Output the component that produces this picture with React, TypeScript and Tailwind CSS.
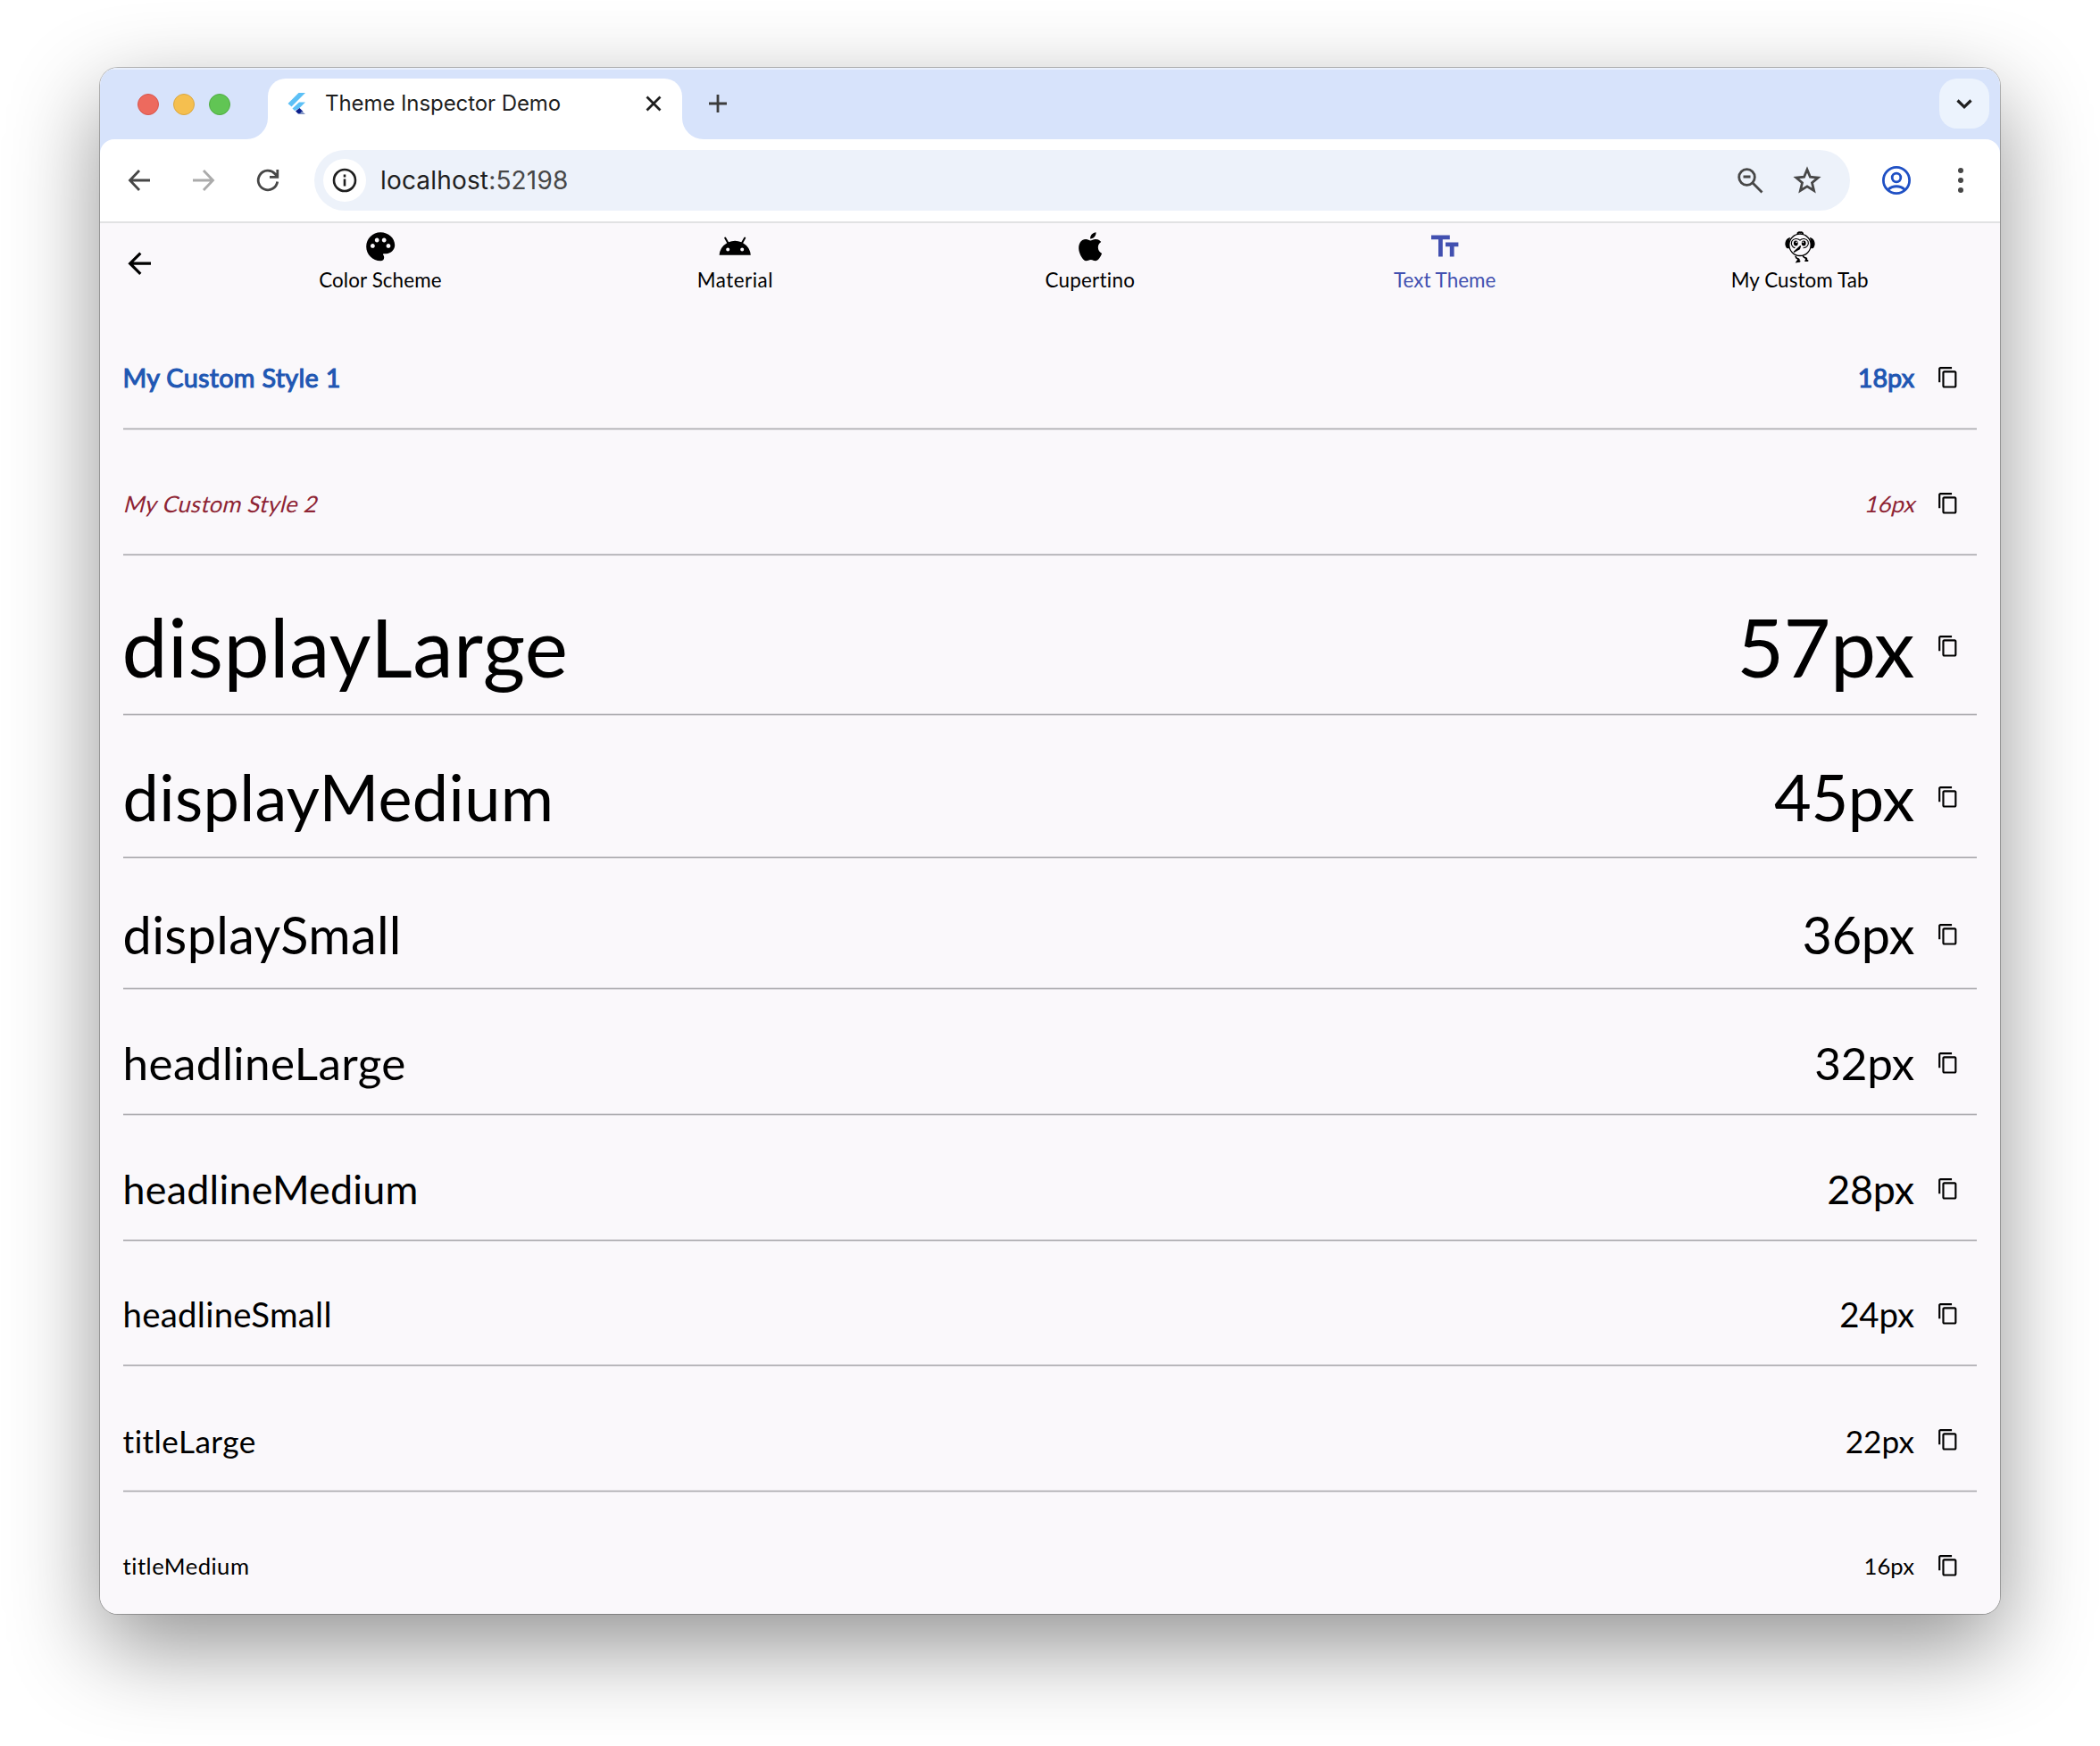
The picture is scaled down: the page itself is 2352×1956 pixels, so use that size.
import React from "react";
import { MdPalette, MdAndroid, MdTextFields, MdContentCopy, MdArrowBack } from "react-icons/md";

type Row = { name: string; size: string; h: string; text: string; track: string; sizeTrack?: string; nudge: string };

const rows: Row[] = [
  { name: "My Custom Style 1", size: "18px", h: "h-[64px]", text: "text-[28.8px] text-[#1f57b3] [-webkit-text-stroke:1.1px_#1f57b3]", track: "tracking-[0.28px]", nudge: "pt-[2px]" },
  { name: "My Custom Style 2", size: "16px", h: "h-[64px]", text: "inline-block origin-[0_80%] -skew-x-[14deg] text-[25.6px] text-[#8e2434]", track: "tracking-[0.24px]", nudge: "pt-[2px]" },
  { name: "displayLarge", size: "57px", h: "h-[102.4px]", text: "text-[91.2px]", track: "tracking-[0.45px] -ml-[1px]", sizeTrack: "tracking-[-0.4px]", nudge: "" },
  { name: "displayMedium", size: "45px", h: "h-[83.2px]", text: "text-[72px]", track: "tracking-[0.35px]", sizeTrack: "tracking-[-0.3px]", nudge: "pb-[3px]" },
  { name: "displaySmall", size: "36px", h: "h-[70.4px]", text: "text-[57.6px]", track: "tracking-[0.35px]", sizeTrack: "tracking-[-0.3px]", nudge: "" },
  { name: "headlineLarge", size: "32px", h: "h-[64px]", text: "text-[51.2px]", track: "tracking-[0.4px]", sizeTrack: "tracking-[-0.2px]", nudge: "" },
  { name: "headlineMedium", size: "28px", h: "h-[64px]", text: "text-[44.8px]", track: "tracking-[0.25px]", sizeTrack: "tracking-[-0.15px]", nudge: "pt-[2px]" },
  { name: "headlineSmall", size: "24px", h: "h-[64px]", text: "text-[38.4px]", track: "tracking-[0.25px]", sizeTrack: "tracking-[-0.15px]", nudge: "" },
  { name: "titleLarge", size: "22px", h: "h-[64px]", text: "text-[35.2px]", track: "tracking-[0.45px]", nudge: "pt-[3px]" },
  { name: "titleMedium", size: "16px", h: "h-[64px]", text: "text-[25.6px]", track: "tracking-[0.5px]", sizeTrack: "tracking-[0.05px]", nudge: "pt-[2px]" },
];

function AppleIcon() {
  return (
    <svg width="38.4" height="38.4" viewBox="0 0 24 24" fill="currentColor">
      <path d="M18.71 19.5c-.83 1.24-1.71 2.45-3.05 2.47-1.34.03-1.77-.79-3.29-.79-1.53 0-2 .77-3.27.82-1.31.05-2.3-1.32-3.14-2.53C4.25 17 2.94 12.45 4.7 9.39c.87-1.52 2.43-2.48 4.12-2.51 1.28-.02 2.5.87 3.29.87.78 0 2.26-1.07 3.81-.91.65.03 2.47.26 3.64 1.98-.09.06-2.17 1.28-2.15 3.81.03 3.02 2.65 4.03 2.68 4.04-.03.07-.42 1.44-1.38 2.83M13 3.5c.73-.83 1.94-1.46 2.94-1.5.13 1.17-.34 2.35-1.04 3.19-.69.85-1.83 1.51-2.95 1.42-.15-1.15.41-2.35 1.05-3.11z" />
    </svg>
  );
}

function BirdIcon() {
  return (
    <svg width="34" height="36" viewBox="0 0 34 36" fill="none" stroke="#000" strokeWidth="1.3" strokeLinecap="round">
      <path d="M14.5 2.2C15.5 1.2 16.5 1 17.5 1.6C18.5 .8 19.5 1.4 20 2.4" strokeWidth="2" />
      <circle cx="17" cy="15.3" r="12.2" />
      <path d="M5.2 7.8C2.4 8.4 1 11.6 1 14.2C1 17.2 2.6 19.2 4.6 18.6C4 15.2 4 11.2 5.2 7.8Z" fill="#000" />
      <path d="M28.8 7.8C31.6 8.4 33 11.6 33 14.2C33 17.2 31.4 19.2 29.4 18.6C30 15.2 30 11.2 28.8 7.8Z" fill="#000" />
      <path d="M17 10.2C14.5 7.6 9.5 7.8 7.8 11.3C6.5 14.8 8.5 18.2 11 18.6M17 10.2C19.2 7.6 24.2 7.8 26 11.3C27.3 15 25 18.5 21 18.7" strokeWidth="1.1" />
      <ellipse cx="12.3" cy="13.6" rx="2.4" ry="3" fill="#000" stroke="none" />
      <ellipse cx="21.2" cy="13.6" rx="2.4" ry="3" fill="#000" stroke="none" />
      <circle cx="13.1" cy="12.4" r=".8" fill="#faf8fb" stroke="none" />
      <circle cx="20.4" cy="12.4" r=".8" fill="#faf8fb" stroke="none" />
      <path d="M17.6 16.6L10 23.4L16.4 19.8Z" fill="#000" />
      <path d="M12.2 28.5C12.4 30 13.5 30.6 15 31.2M20.5 28C21 29.4 22.5 29.6 24 30.4" strokeWidth="1.8" />
      <path d="M15.6 31.6L14 34L16.400 33.600M24.200 31L23.600 33L25.400 33" strokeWidth="2.2" />
    </svg>
  );
}

const tabs = [
  { label: "Color Scheme", icon: <MdPalette size={38.4} />, track: "tracking-[0.1px]" },
  { label: "Material", icon: <MdAndroid size={38.4} />, track: "tracking-[0.5px]" },
  { label: "Cupertino", icon: <AppleIcon />, track: "tracking-[0.25px]" },
  { label: "Text Theme", icon: <MdTextFields size={38.4} />, active: true, track: "tracking-[0.05px]" },
  { label: "My Custom Tab", icon: <BirdIcon />, track: "tracking-[0.1px]" },
];

function FlutterLogo() {
  return (
    <svg width="32" height="32" viewBox="0 0 32 32">
      <path d="M18.5 4H26L10.5 19.5L6.500 16Z" fill="#5cc0f6" />
      <path d="M19 14.500H26L19.5 21L14 24L11.500 21.5Z" fill="#5cc0f6" />
      <path d="M15 24.5L19.500 21L23.500 25L20 27.500H18Z" fill="#0a1f8c" />
      <path d="M22 24.500L26 28H19.500Z" fill="#7f93c4" />
    </svg>
  );
}

function TabStrip() {
  return (
    <div className="flex h-[80px] shrink-0 items-start bg-[#d7e3fb] shadow-[inset_0_2px_0_#e9f0fd]">
      <div className="flex h-[82px] w-[188px] items-center gap-[16px] pl-[42px]">
        <span className="size-[24px] rounded-full border border-[#d8564c] bg-[#ed6a5e]" />
        <span className="size-[24px] rounded-full border border-[#dba73f] bg-[#f5bf4f]" />
        <span className="size-[24px] rounded-full border border-[#51ac42] bg-[#61c554]" />
      </div>
      <div className="relative mt-[12px] flex h-[68px] w-[464px] items-center rounded-t-[20px] bg-white pb-[12px]">
        <svg className="absolute bottom-0 left-[-24px]" width="24" height="24" viewBox="0 0 24 24">
          <path d="M24 0V24H0A24 24 0 0 0 24 0Z" fill="#fff" />
        </svg>
        <svg className="absolute right-[-24px] bottom-0" width="24" height="24" viewBox="0 0 24 24">
          <path d="M0 0V24H24A24 24 0 0 1 0 0Z" fill="#fff" />
        </svg>
        <div className="ml-[16px] flex"><FlutterLogo /></div>
        <span className="ml-[16px] w-[340px] font-['Inter'] text-[24px] leading-[30px] tracking-[-0.08px] text-[#1f1f1f]">Theme Inspector Demo</span>
        <svg className="ml-[18px]" width="20" height="20" viewBox="0 0 20 20" stroke="#1f1f1f" strokeWidth="2.8">
          <path d="M2.5 2.5L17.5 17.5M17.5 2.5L2.5 17.5" />
        </svg>
      </div>
      <svg className="mt-[28px] ml-[28px]" width="24" height="24" viewBox="0 0 24 24" stroke="#3c3c3c" strokeWidth="2.8">
        <path d="M12 2V22M2 12H22" />
      </svg>
      <div className="mt-[12px] mr-[12px] ml-auto flex size-[56px] items-center justify-center rounded-[20px] bg-[#ecf3fd]">
        <svg width="20" height="20" viewBox="0 0 20 20" fill="none" stroke="#1f1f1f" strokeWidth="3.2">
          <path d="M2.5 6.5L10 13.8L17.5 6.5" />
        </svg>
      </div>
    </div>
  );
}

function Toolbar() {
  return (
    <div className="bg-[#d7e3fb]">
      <div className="flex h-[94px] items-center rounded-t-[16px] border-b-2 border-[#e1e2e3] bg-white">
        <svg className="ml-[30px]" width="28" height="28" viewBox="0 0 28 28" fill="none" stroke="#474747" strokeWidth="2.8">
          <path d="M26 14H4M14 3L3.5 14L14 25" />
        </svg>
        <svg className="ml-[44px]" width="28" height="28" viewBox="0 0 28 28" fill="none" stroke="#ababab" strokeWidth="2.8">
          <path d="M2 14H24M14 3L24.5 14L14 25" />
        </svg>
        <svg className="ml-[44px]" width="28" height="28" viewBox="0 0 28 28" fill="none" stroke="#474747" strokeWidth="2.8">
          <path d="M24.7 15.5A10.8 10.8 0 1 1 22 6.7L24.5 9.5M24.8 2V10.4H16" />
        </svg>
        <div className="ml-[38px] flex h-[68px] w-[1720px] items-center rounded-full bg-[#edf2fa]">
          <div className="ml-[10px] flex size-[48px] items-center justify-center rounded-full bg-white">
            <svg width="28" height="28" viewBox="0 0 28 28" fill="none" stroke="#1f1f1f" strokeWidth="2.6">
              <circle cx="14" cy="14" r="12" />
              <path d="M14 12.5V20.5M14 7.5V10.4" />
            </svg>
          </div>
          <span className="ml-[16px] font-['Inter'] text-[28px] leading-[34px] tracking-[0.17px] text-[#474747]">
            <span className="text-[#1f1f1f]">localhost</span>:52198
          </span>
          <svg className="mr-[33px] ml-auto" width="30" height="30" viewBox="0 0 30 30" fill="none" stroke="#474747" strokeWidth="2.8">
            <circle cx="11.5" cy="11.5" r="8.8" />
            <path d="M17.8 17.8L28.5 28.5M7.5 11H15.5" />
          </svg>
          <svg className="mr-[32px]" width="32" height="32" viewBox="0 0 32 32" fill="none" stroke="#474747" strokeWidth="2.8">
            <path d="M16 4L19.4 12.2L28.2 13L21.5 18.8L23.6 27.5L16 22.8L8.4 27.5L10.5 18.8L3.8 13L12.6 12.2Z" />
          </svg>
        </div>
        <svg className="ml-[36px]" width="32" height="32" viewBox="0 0 32 32" fill="none" stroke="#1f50c4" strokeWidth="2.8">
          <circle cx="16" cy="16" r="14.6" />
          <circle cx="16" cy="13" r="4.8" />
          <path d="M6.5 26.5C12 21.5 20 21.5 25.5 26.5" />
        </svg>
        <svg className="ml-[53px]" width="6" height="28" viewBox="0 0 6 28" fill="#474747">
          <circle cx="3" cy="3" r="3" />
          <circle cx="3" cy="14" r="3" />
          <circle cx="3" cy="25" r="3" />
        </svg>
      </div>
    </div>
  );
}

export default function App() {
  return (
    <div className="h-[1956px] w-[2352px] overflow-hidden bg-white pt-[76px] pl-[112px]">
      <div className="h-[1732px] w-[2128px] rounded-[20px] shadow-[0_0_0_1px_rgba(0,0,0,0.25),0_36px_100px_rgba(0,0,0,0.43)]">
        <div className="flex h-full flex-col overflow-hidden rounded-[20px] bg-[#faf8fb] font-['Lato',sans-serif] text-black [font-variant-ligatures:none]">
          <TabStrip />
          <Toolbar />
          <div className="flex h-[89.6px] shrink-0 pr-[25.6px]">
            <div className="flex w-[115.2px] shrink-0 items-center pl-[25px]">
              <MdArrowBack size={38.4} />
            </div>
            {tabs.map((t) => (
              <div key={t.label} className={t.active ? "flex flex-1 flex-col items-center pt-[7.4px] text-[#4250b0]" : "flex flex-1 flex-col items-center pt-[7.4px]"}>
                <div className="flex h-[38.4px] items-center">{t.icon}</div>
                <div className={`mt-[4px] text-[22.4px] leading-[27px] ${t.track}`}>{t.label}</div>
              </div>
            ))}
          </div>
          <div className="flex flex-col px-[25.6px]">
            {rows.map((r) => (
              <div key={r.name} className="flex shrink-0 flex-col pt-[51.2px]">
                <div className={`flex items-center ${r.h}`}>
                  <div className={`flex grow justify-between ${r.nudge}`}>
                    <span className={`leading-none ${r.text} ${r.track}`}>{r.name}</span>
                    <span className={`leading-none ${r.text} ${r.sizeTrack ?? ""}`}>{r.size}</span>
                  </div>
                  <span className="ml-[6.4px] flex w-[64px] justify-center pr-[1px]"><MdContentCopy size={25.6} /></span>
                </div>
                <div className="flex h-[25.6px] flex-col justify-end">
                  <div className="-mb-[1.5px] h-[3px] border-y border-[#e0dee2] bg-[#acabaf]" />
                </div>
              </div>
            ))}
          </div>
        </div>
      </div>
    </div>
  );
}
